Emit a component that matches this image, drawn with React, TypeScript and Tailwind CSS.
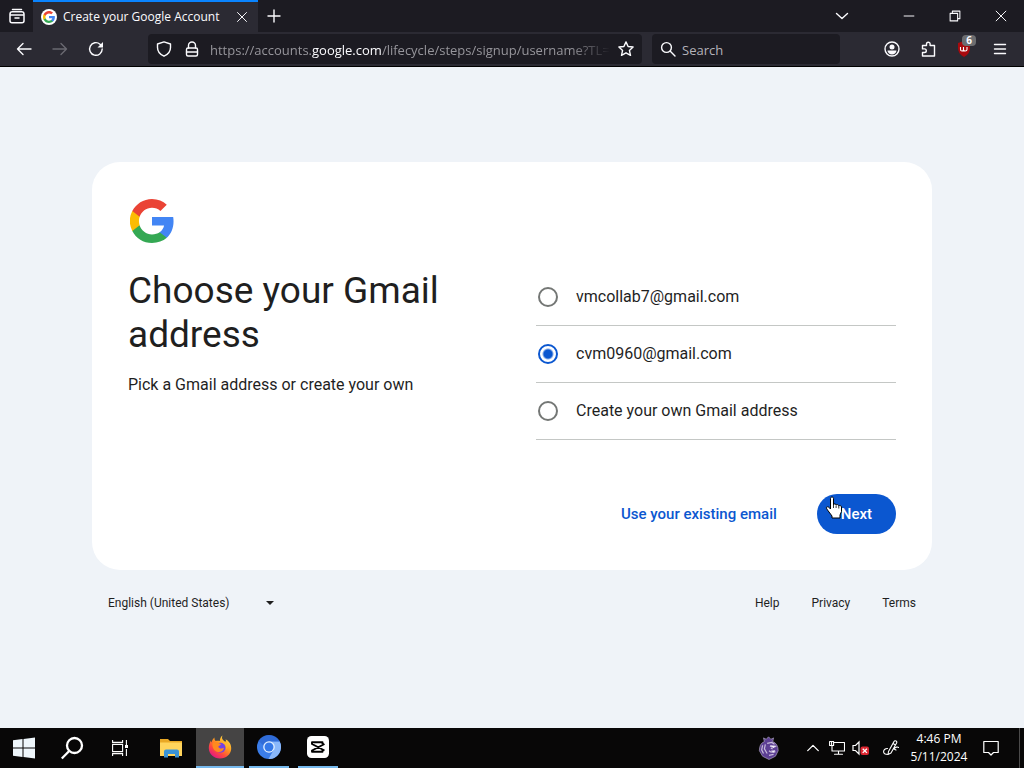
import React, { useState } from "react";

const uiFont = "font-['Open_Sans','Noto_Sans',sans-serif]";

function GoogleG({ className }: { className: string }) {
  return (
    <svg viewBox="0 0 48 48" className={className} aria-hidden="true">
      <path fill="#4285F4" d="M47.5 24.6c0-1.6-.1-3.1-.4-4.9H24v9.300h13.200c-.6 3-2.300 5.600-4.900 7.300v6h7.900c4.600-4.300 7.300-10.300 7.300-17.700z" />
      <path fill="#34A853" d="M24 48c6.500 0 12-2.100 16.200-5.700l-7.900-6c-2.200 1.500-4.900 2.300-8.300 2.300-6.300 0-11.600-4.200-13.500-10H2.500v6.200C6.500 42.600 14.600 48 24 48z" />
      <path fill="#FBBC04" d="M10.500 28.600c-1-3-1-6.200 0-9.200v-6.200H2.500a24 24 0 0 0 0 21.600z" />
      <path fill="#EA4335" d="M24 9.500c3.500 0 6.700 1.200 9.200 3.600l6.900-6.900C35.900 2.400 30.500 0 24 0 14.600 0 6.500 5.400 2.500 13.200l8 6.200C12.400 13.700 17.700 9.500 24 9.500z" />
    </svg>
  );
}

function Icon({ size = "size-4", width = 1.4, children }: { size?: string; width?: number; children: React.ReactNode }) {
  return (
    <svg viewBox="0 0 16 16" className={`${size} shrink-0`} fill="none" stroke="currentColor" strokeWidth={width} strokeLinecap="round" strokeLinejoin="round" aria-hidden="true">
      {children}
    </svg>
  );
}

function IconButton({ label, className, children }: { label: string; className: string; children: React.ReactNode }) {
  return (
    <button type="button" aria-label={label} className={`flex shrink-0 items-center justify-center ${className}`}>
      {children}
    </button>
  );
}

function TabStrip() {
  return (
    <div className="flex h-8 bg-[#1c1b22]">
      <IconButton label="Recent browsing" className="w-[33px]">
        <Icon width={1.500}><path d="M3.500 1.400h9M1 7V6a2.300 2.300 0 0 1 2.300-2.200h9.400A2.300 2.300 0 0 1 15 6v1M1 7h14v5.700a2 2 0 0 1-2 2H3a2 2 0 0 1-2-2zM6 10h4" /></Icon>
      </IconButton>
      <div className="flex w-[225px] items-center border-t-2 border-[#0a84ff] bg-[#2b2a33] pl-2">
        <span className="flex size-4 items-center justify-center rounded-full bg-white"><GoogleG className="size-3" /></span>
        <span className="ml-1.5 flex-1 whitespace-nowrap text-[12px]">Create your Google Account</span>
        <IconButton label="Close tab" className="w-8"><Icon size="size-3" width={1.300}><path d="m2 2 12 12M14 2 2 14" /></Icon></IconButton>
      </div>
      <IconButton label="New tab" className="w-8"><Icon><path d="M8 2v12M2 8h12" /></Icon></IconButton>
      <div className="flex-1" />
      <IconButton label="List all tabs" className="w-9"><Icon><path d="m2.500 5.500 5.500 5 5.500-5" /></Icon></IconButton>
      <div className="w-[26px]" />
      <IconButton label="Minimize" className="w-[46px]"><Icon size="size-3" width={1.300}><path d="M1.500 8h13" /></Icon></IconButton>
      <IconButton label="Restore" className="w-[46px]"><Icon size="size-3" width={1.400}><path d="M1.500 4.500h10v10h-10zM4.500 4.500v-3h10v10h-3" /></Icon></IconButton>
      <IconButton label="Close window" className="w-[46px]"><Icon size="size-3" width={1.300}><path d="m1.500 1.500 13 13M14.500 1.500l-13 13" /></Icon></IconButton>
    </div>
  );
}

function Toolbar() {
  return (
    <div className="flex h-[35px] items-center border-b border-black bg-[#2b2a33]">
      <div className="flex w-[148px] shrink-0 pl-1.5">
        <IconButton label="Back" className="w-9"><Icon><path d="M15 8H1.500M7 2.500 1.500 8 7 13.500" /></Icon></IconButton>
        <IconButton label="Forward" className="w-9 text-[#6a6971]"><Icon><path d="M1 8h13.500M9 2.500 14.500 8 9 13.500" /></Icon></IconButton>
        <IconButton label="Reload" className="w-9"><Icon><path d="M14.200 8A6.300 6.300 0 1 1 12 3.200l2 2" /><path fill="currentColor" stroke="none" d="M15 1v5.500H9.500z" /></Icon></IconButton>
      </div>
      <div className="flex h-[30px] min-w-0 flex-1 items-center rounded-sm bg-[#1c1b22]">
        <IconButton label="Tracking protection" className="w-8"><Icon><path d="M8 .9 14.500 3v3.500c0 4-2.500 7-6.500 8.700-4-1.700-6.500-4.700-6.500-8.700V3z" /></Icon></IconButton>
        <IconButton label="Site information" className="w-6"><Icon><rect x="2.500" y="7" width="11" height="8" rx="1.500" /><path d="M4.500 7V4.500a3.500 3.500 0 0 1 7 0V7M2.500 11h11" /></Icon></IconButton>
        <a href="#address" className="ml-1.5 min-w-0 flex-1 overflow-hidden pt-1 whitespace-nowrap text-[13px] text-[#96959b] [mask-image:linear-gradient(to_right,black_90%,transparent)]">
          https://accounts.<span className="text-[#fbfbfe]">google.com</span>/lifecycle/steps/signup/username?TL=
        </a>
        <IconButton label="Bookmark" className="w-8"><Icon><path d="m8 .9 2.100 4.600 5 .5-3.700 3.400 1.100 4.900L8 11.800l-4.500 2.500 1.100-4.900L.9 6l5-.5z" /></Icon></IconButton>
      </div>
      <label className="ml-2.5 flex h-[30px] w-[188px] shrink-0 items-center rounded-sm bg-[#1c1b22] pl-2">
        <Icon><circle cx="6.500" cy="6.500" r="4.900" /><path d="m10.300 10.300 4.700 4.700" /></Icon>
        <input aria-label="Search" placeholder="Search" className="ml-1.5 min-w-0 flex-1 bg-transparent pt-1 text-[13px] outline-none placeholder:text-[#b4b3ba]" />
      </label>
      <div className="ml-[34px] flex shrink-0 pr-1.5">
        <IconButton label="Account" className="w-9"><Icon><circle cx="8" cy="8" r="7" /><circle cx="8" cy="6" r="2.500" fill="currentColor" stroke="none" /><path fill="currentColor" stroke="none" d="M3.500 9.500h9c0 2-2 4-4.500 4s-4.500-2-4.500-4z" /></Icon></IconButton>
        <IconButton label="Extensions" className="w-9"><Icon><path d="M2.500 4.500h4V3a1.800 1.800 0 0 1 3.600 0v1.500H14.500V15h-12v-3.500h2a1.800 1.800 0 0 0 0-3.600h-2z" /></Icon></IconButton>
        <IconButton label="Content blocker, 6 blocked" className="relative w-9">
          <svg viewBox="0 0 16 16" className="size-4" aria-hidden="true"><path fill="#a80a0e" d="M8 0 14 2v5c0 4-2 7-6 9-4-2-6-5-6-9V2z" /><path d="M4.500 6v2.500c0 2 3 2 3 0V6v2.500c0 2 3.500 2 3.500 0V6" fill="none" stroke="white" strokeWidth="1.100" /></svg>
          <span className="absolute -top-1.5 right-1.5 rounded-sm bg-[#6c6d70] px-1 text-[10px] leading-[11px] font-bold">6</span>
        </IconButton>
        <IconButton label="Menu" className="w-9"><Icon><path d="M2.500 3.500h11M2.500 8h11M2.500 12.500h11" /></Icon></IconButton>
      </div>
    </div>
  );
}

const choices = ["vmcollab7@gmail.com", "cvm0960@gmail.com", "Create your own Gmail address"];

function PointerHand() {
  return (
    <svg viewBox="0 0 20 24" className="absolute top-0.5 left-2 h-6 w-5" aria-hidden="true">
      <path fill="white" stroke="black" strokeWidth="1" strokeLinejoin="round" d="M5.500 2.500c0-2 3-2 3 0v6c.6-1 2.500-.7 2.600.5.700-.8 2.600-.4 2.700.8.800-.6 2.700-.2 2.700 1.200v4.500l-1.500 3.500v3H7v-2l-4.500-6C1 12 1.200 10.800 2.400 10.800c1.200 0 2.100 1 3.100 2.200z" />
      <path stroke="black" strokeWidth=".8" d="M8.500 8v4M11.100 9.500V12M13.800 10v2.500" />
    </svg>
  );
}

function SignupCard() {
  const [selected, setSelected] = useState(1);
  return (
    <form className="rounded-[28px] bg-white p-9" onSubmit={(e) => e.preventDefault()}>
      <GoogleG className="mt-px ml-0.5 size-11" />
      <div className="mt-[26px] grid grid-cols-2 gap-12">
        <div>
          <h1 className="text-[37px] leading-[44px]">Choose your Gmail address</h1>
          <p className="mt-4 text-[16px] leading-6">Pick a Gmail address or create your own</p>
        </div>
        <div role="radiogroup" aria-label="Gmail address">
          {choices.map((choice, i) => (
            <label key={choice} className="flex h-[57px] items-center border-b border-[#c4c7c5] pl-0.5 text-[16px]">
              <input type="radio" name="address" checked={selected === i} onChange={() => setSelected(i)} className="size-5 appearance-none rounded-full border-2 border-[#747775] checked:border-[#0b57d0] checked:bg-[radial-gradient(circle,#0b57d0_4px,transparent_6px)]" />
              <span className="ml-[18px]">{choice}</span>
            </label>
          ))}
        </div>
      </div>
      <div className="mt-[54px] flex items-center justify-end gap-10 text-[15px] font-medium">
        <button type="button" className="text-[#0b57d0]">Use your existing email</button>
        <button type="submit" className="relative h-10 rounded-full bg-[#0b57d0] px-6 text-white">Next<PointerHand /></button>
      </div>
    </form>
  );
}

function SignupFooter() {
  return (
    <footer className="flex items-center justify-between px-4 pt-[21px] text-[12px]">
      <div className="relative flex items-center">
        <select aria-label="Language" className="w-[172px] appearance-none bg-transparent leading-6">
          <option>English (United States)</option>
        </select>
        <svg viewBox="0 0 8 4" className="pointer-events-none absolute right-1.5 h-1 w-2" aria-hidden="true"><path d="M0 0h8L4 4z" fill="#1f1f1f" /></svg>
      </div>
      <nav className="flex gap-8">
        <a href="#help">Help</a>
        <a href="#privacy">Privacy</a>
        <a href="#terms">Terms</a>
      </nav>
    </footer>
  );
}

function Firefox() {
  return (
    <svg viewBox="0 0 24 24" className="size-6" aria-hidden="true">
      <defs>
        <linearGradient id="flame" x1=".85" y1=".05" x2=".2" y2=".95">
          <stop offset="0" stopColor="#ffe14a" />
          <stop offset=".4" stopColor="#ff9a1f" />
          <stop offset=".7" stopColor="#ff4a3d" />
          <stop offset="1" stopColor="#e21587" />
        </linearGradient>
      </defs>
      <path fill="url(#flame)" d="M14.500.5c-1 2-.5 3.600.8 4.800 1 1 2.200 1.500 2.700 3 .3-1.500 0-3-.5-4C21 6 23.500 9.500 23.200 14 22.800 19.500 18 23.500 12 23.500S.8 19 .8 13c0-3.200 1-5.700 2.200-7.500.1 1 .3 1.500.7 1.900C4.200 5 5 3.700 6.500 2.500c-.2 1.500.2 2.600 1.200 3.500 1.500-.5 3-.4 4.200.1-.2-2.300.8-4.300 2.600-5.600z" />
      <circle cx="12.500" cy="12.800" r="5" fill="#7542e5" />
      <path fill="#ff8a1f" d="M4.500 8.500c2-2 4.800-1.900 6.300-.3l2.200.7c-.3 1.500-2.500 1.600-2.700 2.800.8 2.300 3.700 2 5.700 1-.5 3-3.300 4.800-6 4.300C6.500 16.500 4 13 4.500 8.500z" />
      <path fill="#ffb52b" d="M14 7.500c3 1 5 3.500 4.300 7 2.200-2.500 2-5.700-.3-8.200-1 .6-2.300 1-4 1.200z" />
    </svg>
  );
}

function Chromium() {
  return (
    <svg viewBox="0 0 24 24" className="size-6" aria-hidden="true">
      <circle cx="12" cy="12" r="12" fill="#3b7de9" />
      <path fill="#8ab8fb" d="M12 6.500h10.700A12 12 0 0 1 11.500 24l5.300-9.200z" />
      <path fill="#2459c4" d="M1.600 6A12 12 0 0 1 22.700 6.500H12a5.500 5.500 0 0 0-5.300 4.200L1.600 6z" opacity=".45" />
      <circle cx="12" cy="12" r="5.800" fill="#e4f0ff" />
      <circle cx="12" cy="12" r="4.500" fill="#3478e8" />
    </svg>
  );
}

function CapCut() {
  return (
    <svg viewBox="0 0 22 22" className="size-[22px]" aria-hidden="true">
      <rect width="22" height="22" rx="4.500" fill="white" />
      <path d="M17.500 8 5 14.500v1.200h10.500V14M17.500 14.500 5 8V6.300h10.500V8" fill="none" stroke="black" strokeWidth="1.900" strokeLinejoin="round" />
    </svg>
  );
}

function Lion() {
  return (
    <svg viewBox="0 0 24 26" className="h-6 w-[22px]" aria-hidden="true">
      <path fill="#5d3f94" stroke="#a69bbb" strokeWidth=".8" d="m7 6-1-4 3 1.500L11.500.800 14 3.500 17 2l-1 4c4 1.500 6 5 6 10l-3 6-7 3.500L5 22l-3.500-6C1.500 11 3 7.500 7 6z" />
      <path fill="none" stroke="#c8bddb" strokeWidth="1.300" d="m10 8 5-1 3 2M5 10l-1 5 2 4M13 11l4 1 3-1M14 13l2 1M12 16c2 2 4 2 7 1M8 9l-1 5 3 5M12 21l5-1" />
      <path fill="#f1ecfa" d="m13 10 6 .5-2 2.500zM14 16l5-.5-2 2.500z" />
    </svg>
  );
}

function RunningApp({ label, children }: { label: string; children: React.ReactNode }) {
  return (
    <button type="button" aria-label={label} className="flex w-12 shrink-0 flex-col items-center px-1">
      <span className="flex flex-1 items-center">{children}</span>
      <span className="h-0.5 w-full bg-[#76b9ed]" />
    </button>
  );
}

function Taskbar() {
  return (
    <footer className="flex h-10 items-stretch bg-[#080707] text-white">
      <IconButton label="Start" className="w-12"><svg viewBox="0 0 22 22" className="size-[22px]" fill="#eef6fb" aria-hidden="true"><path d="M0 3.300 9.500 2v8.500H0zM10.500 1.900 22 .5v10H10.500zM0 11.500h9.500V20L0 18.700zM10.500 11.500H22v10l-11.500-1.400z" /></svg></IconButton>
      <IconButton label="Search" className="w-12"><svg viewBox="0 0 24 24" className="size-6" fill="none" stroke="white" strokeWidth="2.300" aria-hidden="true"><circle cx="14.500" cy="9.500" r="7.500" /><path d="m9.200 15-7.400 7.500" /></svg></IconButton>
      <IconButton label="Task view" className="w-12"><svg viewBox="0 0 16 16" className="size-4" fill="none" stroke="white" strokeWidth="1.100" aria-hidden="true"><path d="M.6 0v2.400h10V0M.6 4.400h10v7.200H.6zM.6 16v-2.400h10V16M14.400 0v5M14.400 9v7" /><path fill="white" stroke="none" d="M13 5h3v3h-3z" /></svg></IconButton>
      <IconButton label="File Explorer" className="ml-[3px] w-12"><svg viewBox="0 0 24 20" className="h-5 w-6" aria-hidden="true"><path fill="#e9a825" d="M1 1h8l2 2h12v15H1z" /><path fill="#ffd45c" d="M1 4.500h22V18H1z" /><path fill="#3a93d6" d="M5 19.500v-6a2 2 0 0 1 2-2h11a2 2 0 0 1 2 2v6h-4v-3.500H9v3.500z" /></svg></IconButton>
      <IconButton label="Firefox" className="ml-px w-12 border-b-2 border-[#76b9ed] bg-[#454444]"><Firefox /></IconButton>
      <div className="ml-px flex gap-px">
        <RunningApp label="Chromium"><Chromium /></RunningApp>
        <RunningApp label="CapCut"><CapCut /></RunningApp>
      </div>
      <div className="flex-1" />
      <IconButton label="Lion" className="w-12"><Lion /></IconButton>
      <div className="w-2" />
      <IconButton label="Show hidden icons" className="w-6"><Icon size="size-3" width={1.700}><path d="m1 11.500 7-7 7 7" /></Icon></IconButton>
      <IconButton label="Network" className="w-6"><Icon width={1.100}><path d="M5 2.500h10.500v8.500H3V6M9.500 11v3M5.500 14.300h8M.6 1.500h4v4h-4zM2.600 1.500v4" /></Icon></IconButton>
      <IconButton label="Volume muted" className="w-6">
        <svg viewBox="0 0 18 16" className="h-4 w-[18px]" aria-hidden="true">
          <path d="M1 5.500h2.500L7 2v12l-3.500-3.500H1z" fill="none" stroke="white" strokeWidth="1.200" />
          <rect x="8.500" y="6.500" width="8.500" height="8.500" rx="2" fill="#dc2631" />
          <path d="m10.700 8.700 4.200 4.200M14.900 8.700l-4.200 4.200" stroke="white" strokeWidth="1.300" />
        </svg>
      </IconButton>
      <IconButton label="Pen" className="ml-1 w-7"><Icon width={1.100}><path d="M5.500 11.500 11 1.500c1-1.500 3.500-.2 2.600 1.400L8 13l-3 1.500zM10 3.500l2.500 1.400M4.500 8.500C2 8.500.5 10 .6 12c.2 2.500 3.400 2.500 4.400 2.500M11 9c1.500-2 3.500-2.500 4.500-1.500M11 9l2 1" /></Icon></IconButton>
      <button type="button" className="flex w-[68px] flex-col items-center justify-center text-[12px] leading-[18px]">
        <span>4:46 PM</span>
        <span>5/11/2024</span>
      </button>
      <IconButton label="Notifications" className="w-9"><Icon width={1.200}><path d="M.8 1.500h14.400v11h-4.700L8 15l-2.500-2.500H.8z" /></Icon></IconButton>
      <button type="button" aria-label="Show desktop" className="ml-2.5 w-[5px] border-l border-[#4b4a4a]" />
    </footer>
  );
}

export default function App() {
  return (
    <div className={`flex min-h-screen flex-col bg-[#eff3f8] text-[#fbfbfe] ${uiFont}`}>
      <header><TabStrip /><Toolbar /></header>
      <main className="flex flex-1 flex-col px-[92px] pt-[95px] font-['Roboto',sans-serif] text-[#1f1f1f]">
        <SignupCard />
        <SignupFooter />
      </main>
      <Taskbar />
    </div>
  );
}
